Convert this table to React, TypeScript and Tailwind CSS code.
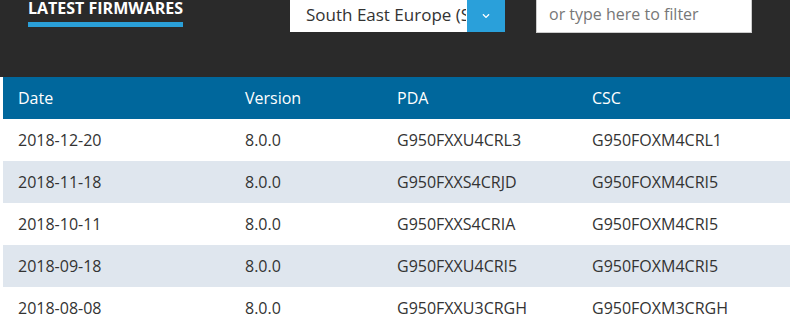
import { FaChevronDown } from 'react-icons/fa'

const rows = [
  { date: '2018-12-20', version: '8.0.0', pda: 'G950FXXU4CRL3', csc: 'G950FOXM4CRL1' },
  { date: '2018-11-18', version: '8.0.0', pda: 'G950FXXS4CRJD', csc: 'G950FOXM4CRI5' },
  { date: '2018-10-11', version: '8.0.0', pda: 'G950FXXS4CRIA', csc: 'G950FOXM4CRI5' },
  { date: '2018-09-18', version: '8.0.0', pda: 'G950FXXU4CRI5', csc: 'G950FOXM4CRI5' },
  { date: '2018-08-08', version: '8.0.0', pda: 'G950FXXU3CRGH', csc: 'G950FOXM3CRGH' },
]

const cols = 'grid grid-cols-[227px_152px_195px_1fr]'

const App = () => {
  return (
    <div className="w-[790px] h-[326px] overflow-hidden bg-white font-['Open_Sans',sans-serif]">
      {/* Top bar */}
      <div className="h-[77px] bg-[#2a2a2a] flex items-start">
        <div className="ml-[28px] w-[155px]">
          <h2 className="text-white font-bold text-[16px] leading-[16px] whitespace-nowrap">LATEST FIRMWARES</h2>
          <div className="mt-[6px] h-[5px] bg-[#2a9fd8]" />
        </div>

        <div className="ml-[107px] flex h-[32px]">
          <div className="w-[177px] bg-white pl-[16px] overflow-hidden">
            <span className="block whitespace-nowrap overflow-hidden w-[160px] text-[17px] leading-[30px] text-[#333]">
              South East Europe (SEE)
            </span>
          </div>
          <div className="w-[38px] bg-[#2aa0da] flex items-center justify-center">
            <FaChevronDown className="w-[8px] h-[8px] text-white" />
          </div>
        </div>

        <div className="ml-[31px] w-[216px] h-[33px] bg-white border border-[#ccc] border-t-0 pl-[12px]">
          <span className="text-[16px] leading-[28px] text-[#777]">or type here to filter</span>
        </div>
      </div>

      {/* Table */}
      <div className="ml-[3px] text-[16px]">
        <div className={`${cols} h-[42px] items-center bg-[#00679c] text-white`}>
          <div className="pl-[15px]">Date</div>
          <div className="pl-[15px]">Version</div>
          <div className="pl-[15px]">PDA</div>
          <div className="pl-[15px]">CSC</div>
        </div>
        {rows.map((r, i) => (
          <div
            key={r.date}
            className={`${cols} h-[42px] items-center text-[#333] ${i % 2 === 1 ? 'bg-[#dfe6ee]' : 'bg-white'}`}
          >
            <div className="pl-[15px]">{r.date}</div>
            <div className="pl-[15px]">{r.version}</div>
            <div className="pl-[15px]">{r.pda}</div>
            <div className="pl-[15px]">{r.csc}</div>
          </div>
        ))}
      </div>
    </div>
  )
}

export default App
